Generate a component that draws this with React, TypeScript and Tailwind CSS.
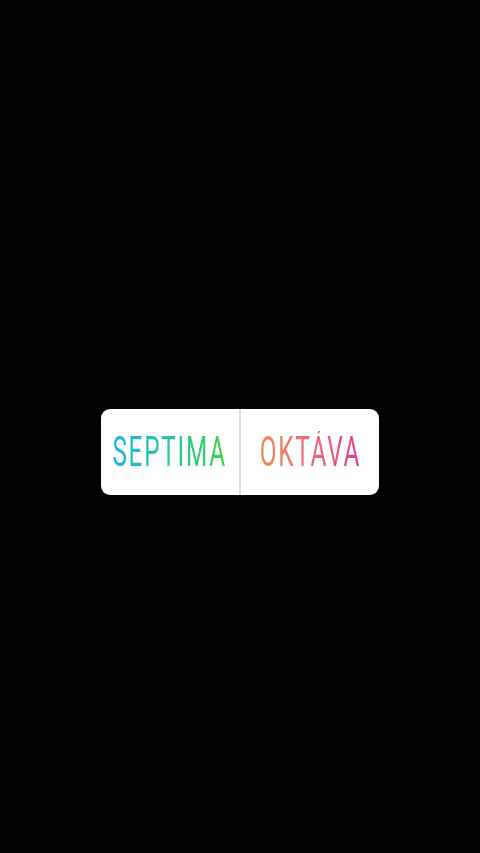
import React from 'react';

const Option = ({ label, gradient }: { label: string; gradient: string }) => (
  <div className="flex-1 basis-0 min-w-0 flex items-center justify-center">
    <span
      className={`inline-block shrink-0 scale-x-[0.58] bg-clip-text text-transparent text-[42px] font-normal leading-none tracking-[3px] ${gradient}`}
      style={{ fontFamily: 'Roboto, "Liberation Sans", sans-serif' }}
    >
      {label}
    </span>
  </div>
);

const App = () => {
  return (
    <div className="w-[480px] h-[853px] bg-[#030303] flex flex-col items-center pt-[409px]">
      <div className="w-[278px] h-[86px] bg-white rounded-[9px] flex overflow-hidden">
        <Option label="SEPTIMA" gradient="bg-gradient-to-r from-[#22b2e0] to-[#3fd23a]" />
        <div className="w-[2px] bg-[#d9d9d9]" />
        <Option label="OKTÁVA" gradient="bg-gradient-to-r from-[#f2894a] to-[#e43c90]" />
      </div>
    </div>
  );
};

export default App;
